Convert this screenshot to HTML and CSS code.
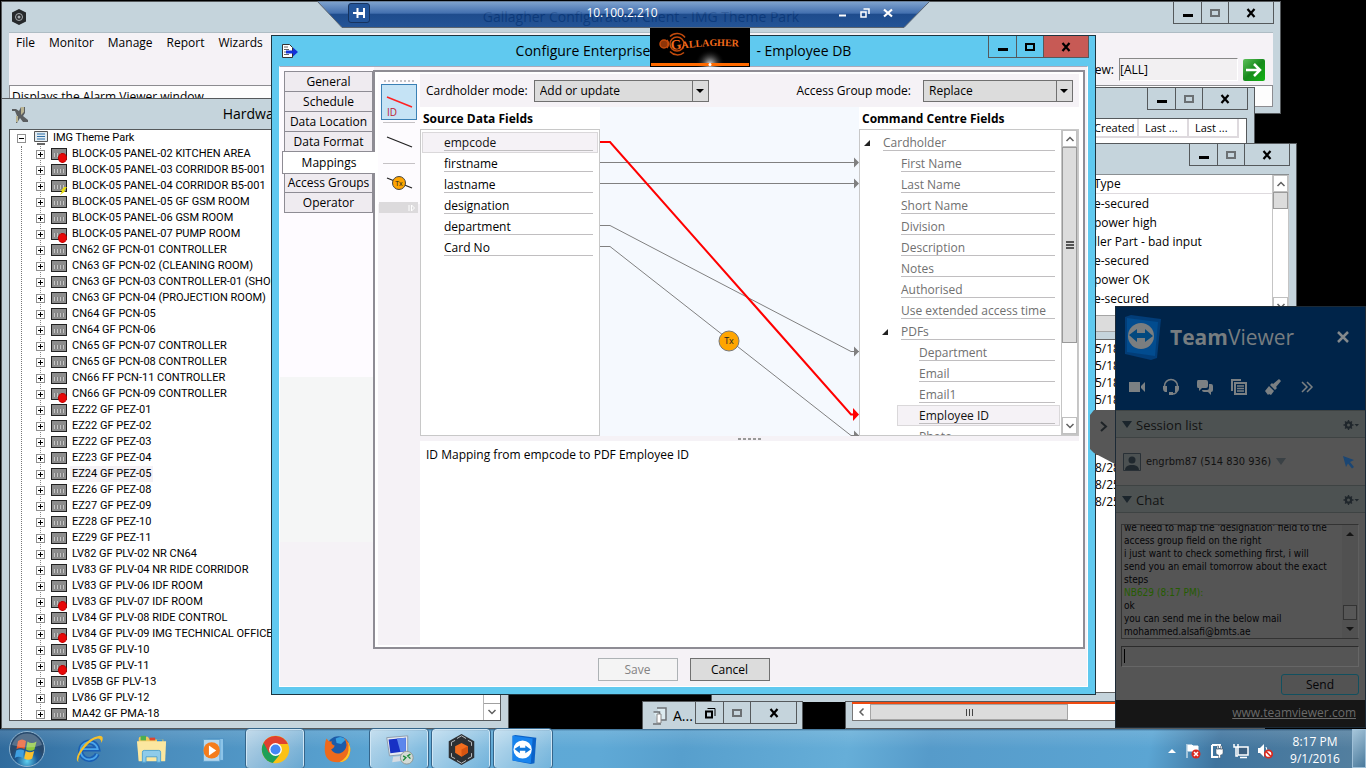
FILE: index.html
```html
<!DOCTYPE html>
<html lang="en">
<head>
<meta charset="utf-8">
<title>10.100.2.210 - Remote Desktop</title>
<link rel="stylesheet" href="styles.css">
</head>
<body>
<svg width="0" height="0" class="defs" aria-hidden="true">
  <defs>
    <symbol id="min" viewBox="0 0 12 12"><path d="M1 7h10v3H1z" fill="#000"/></symbol>
    <symbol id="max" viewBox="0 0 12 12"><path d="M2 3h8v6H2z" fill="none" stroke="currentColor" stroke-width="2"/></symbol>
    <symbol id="close" viewBox="0 0 12 12"><path d="M2.500 2l7 8M9.500 2l-7 8" stroke="#000" stroke-width="2.200"/></symbol>
    <symbol id="up" viewBox="0 0 10 10"><path d="M1.500 7L5 3.500 8.500 7" fill="none" stroke="#606060" stroke-width="1.500"/></symbol>
    <symbol id="down" viewBox="0 0 10 10"><path d="M1.500 3L5 6.500 8.500 3" fill="none" stroke="#606060" stroke-width="1.500"/></symbol>
    <symbol id="gear" viewBox="0 0 16 12"><circle cx="5.500" cy="6" r="2.700" fill="none" stroke="#20272c" stroke-width="2"/><path d="M5.500 1v10M.5 6h10M2 2.500l7 7M9 2.500l-7 7" stroke="#20272c" stroke-width="1.300"/><circle cx="5.500" cy="6" r="1.500" fill="#4d5252"/><path d="M11.500 5h4.500l-2.200 2.500z" fill="#20272c"/></symbol>
  </defs>
</svg>

<main class="desktop">

  <section class="win win-main">
    <header class="bar">
      <span class="bar-icon"><svg width="16" height="16" viewBox="0 0 16 16"><path d="M8 0l7 3.500v9L8 16l-7-3.500v-9z" fill="#26292b"/><circle cx="8" cy="8" r="3.500" fill="none" stroke="#a8adb0"/><circle cx="8" cy="8" r="1.500" fill="#a8adb0"/></svg></span>
      <h2 class="bar-title">Gallagher Configuration Client - IMG Theme Park</h2>
      <span class="ctls"><button aria-label="Minimize"><svg><use href="#min"/></svg></button><button aria-label="Maximize" class="dim"><svg><use href="#max"/></svg></button><button aria-label="Close"><svg><use href="#close"/></svg></button></span>
    </header>
    <div class="main-body">
      <nav class="menu"><a href="#">File</a><a href="#">Monitor</a><a href="#">Manage</a><a href="#">Report</a><a href="#">Wizards</a><a href="#">Configure</a></nav>
      <div class="viewbar"><label for="view">view:</label><input id="view" value="[ALL]"><button class="go" aria-label="Go"><svg width="22" height="22" viewBox="0 0 22 22"><path d="M3 11h14M11 5l6 6-6 6" fill="none" stroke="#fff" stroke-width="2.500"/></svg></button></div>
      <div class="status">Displays the Alarm Viewer window</div>
    </div>
  </section>

  <section class="win win-hardware">
    <header class="bar">
      <span class="bar-icon"><svg width="18" height="18" viewBox="0 0 18 18"><path d="M1 3h4l3 2 2-4h4v6l-2 3 5 4v2h-5l-3-4-3 5H5l1-7-2-5H1z" fill="#5b5e60"/><path d="M10 1l3 0v5l-3 3zM5 10h2v6H5z" fill="#b9b391"/></svg></span>
      <h2 class="bar-title">Hardware</h2>
      <span></span>
    </header>
    <div class="tree">
      <div class="tree-root"><button class="tog open" aria-label="Collapse"></button><svg width="14" height="14" viewBox="0 0 14 14"><path d="M.5.500h13v10H.5z" fill="#e2ecf2" stroke="#565656"/><path d="M3 3h8M3 5.500h8M3 8h8" stroke="#2d6ea8"/><path d="M3 12h8v2H3z" fill="#666"/></svg><span>IMG Theme Park</span></div>
      <ul>
        <li><button class="tog" aria-label="Expand"></button><i class="dev alarm"></i><span>BLOCK-05 PANEL-02 KITCHEN AREA</span></li>
        <li><button class="tog" aria-label="Expand"></button><i class="dev"></i><span>BLOCK-05 PANEL-03 CORRIDOR B5-001</span></li>
        <li><button class="tog" aria-label="Expand"></button><i class="dev power"></i><span>BLOCK-05 PANEL-04 CORRIDOR B5-001</span></li>
        <li><button class="tog" aria-label="Expand"></button><i class="dev"></i><span>BLOCK-05 PANEL-05 GF GSM ROOM</span></li>
        <li><button class="tog" aria-label="Expand"></button><i class="dev"></i><span>BLOCK-05 PANEL-06 GSM ROOM</span></li>
        <li><button class="tog" aria-label="Expand"></button><i class="dev alarm"></i><span>BLOCK-05 PANEL-07 PUMP ROOM</span></li>
        <li><button class="tog" aria-label="Expand"></button><i class="dev"></i><span>CN62 GF PCN-01 CONTROLLER</span></li>
        <li><button class="tog" aria-label="Expand"></button><i class="dev"></i><span>CN63 GF PCN-02 (CLEANING ROOM)</span></li>
        <li><button class="tog" aria-label="Expand"></button><i class="dev"></i><span>CN63 GF PCN-03 CONTROLLER-01 (SHOP)</span></li>
        <li><button class="tog" aria-label="Expand"></button><i class="dev"></i><span>CN63 GF PCN-04 (PROJECTION ROOM)</span></li>
        <li><button class="tog" aria-label="Expand"></button><i class="dev"></i><span>CN64 GF PCN-05</span></li>
        <li><button class="tog" aria-label="Expand"></button><i class="dev"></i><span>CN64 GF PCN-06</span></li>
        <li><button class="tog" aria-label="Expand"></button><i class="dev"></i><span>CN65 GF PCN-07 CONTROLLER</span></li>
        <li><button class="tog" aria-label="Expand"></button><i class="dev"></i><span>CN65 GF PCN-08 CONTROLLER</span></li>
        <li><button class="tog" aria-label="Expand"></button><i class="dev"></i><span>CN66 FF PCN-11 CONTROLLER</span></li>
        <li><button class="tog" aria-label="Expand"></button><i class="dev alarm"></i><span>CN66 GF PCN-09 CONTROLLER</span></li>
        <li><button class="tog" aria-label="Expand"></button><i class="dev"></i><span>EZ22 GF PEZ-01</span></li>
        <li><button class="tog" aria-label="Expand"></button><i class="dev"></i><span>EZ22 GF PEZ-02</span></li>
        <li><button class="tog" aria-label="Expand"></button><i class="dev"></i><span>EZ22 GF PEZ-03</span></li>
        <li><button class="tog" aria-label="Expand"></button><i class="dev"></i><span>EZ23 GF PEZ-04</span></li>
        <li><button class="tog" aria-label="Expand"></button><i class="dev"></i><span class="picked">EZ24 GF PEZ-05</span></li>
        <li><button class="tog" aria-label="Expand"></button><i class="dev"></i><span>EZ26 GF PEZ-08</span></li>
        <li><button class="tog" aria-label="Expand"></button><i class="dev"></i><span>EZ27 GF PEZ-09</span></li>
        <li><button class="tog" aria-label="Expand"></button><i class="dev"></i><span>EZ28 GF PEZ-10</span></li>
        <li><button class="tog" aria-label="Expand"></button><i class="dev"></i><span>EZ29 GF PEZ-11</span></li>
        <li><button class="tog" aria-label="Expand"></button><i class="dev"></i><span>LV82 GF PLV-02 NR CN64</span></li>
        <li><button class="tog" aria-label="Expand"></button><i class="dev"></i><span>LV83 GF PLV-04 NR RIDE CORRIDOR</span></li>
        <li><button class="tog" aria-label="Expand"></button><i class="dev"></i><span>LV83 GF PLV-06 IDF ROOM</span></li>
        <li><button class="tog" aria-label="Expand"></button><i class="dev alarm"></i><span>LV83 GF PLV-07 IDF ROOM</span></li>
        <li><button class="tog" aria-label="Expand"></button><i class="dev"></i><span>LV84 GF PLV-08 RIDE CONTROL</span></li>
        <li><button class="tog" aria-label="Expand"></button><i class="dev alarm"></i><span>LV84 GF PLV-09 IMG TECHNICAL OFFICE</span></li>
        <li><button class="tog" aria-label="Expand"></button><i class="dev"></i><span>LV85 GF PLV-10</span></li>
        <li><button class="tog" aria-label="Expand"></button><i class="dev alarm"></i><span>LV85 GF PLV-11</span></li>
        <li><button class="tog" aria-label="Expand"></button><i class="dev"></i><span>LV85B GF PLV-13</span></li>
        <li><button class="tog" aria-label="Expand"></button><i class="dev"></i><span>LV86 GF PLV-12</span></li>
        <li><button class="tog" aria-label="Expand"></button><i class="dev"></i><span>MA42 GF PMA-18</span></li>
      </ul>
      <div class="tree-scroll"><button aria-label="Scroll down"><svg width="10" height="10"><use href="#down"/></svg></button></div>
    </div>
  </section>

  <section class="win win-list">
    <header class="bar"><span></span><span></span>
      <span class="ctls"><button aria-label="Minimize"><svg><use href="#min"/></svg></button><button aria-label="Maximize" class="dim"><svg><use href="#max"/></svg></button><button aria-label="Close"><svg><use href="#close"/></svg></button></span>
    </header>
    <div class="client">
      <table>
        <tr><th>Created</th><th>Last ...</th><th>Last ...</th></tr>
        <tr><td>7/5/2...</td><td>8/22/...</td><td>Syst...</td></tr>
      </table>
    </div>
  </section>

  <section class="win win-events">
    <header class="bar"><span></span><span></span>
      <span class="ctls"><button aria-label="Minimize"><svg><use href="#min"/></svg></button><button aria-label="Maximize" class="dim"><svg><use href="#max"/></svg></button><button aria-label="Close"><svg><use href="#close"/></svg></button></span>
    </header>
    <div class="events">
      <div class="events-rows"><b>Type</b><p>e-secured</p><p>power high</p><p>ller Part - bad input</p><p>e-secured</p><p>power OK</p><p>e-secured</p></div>
      <div class="vscroll"><button aria-label="Scroll up"><svg width="10" height="10"><use href="#up"/></svg></button><i></i><button class="end" aria-label="Scroll down"><svg width="10" height="10"><use href="#down"/></svg></button></div>
    </div>
    <div class="hscroll"></div>
    <div class="dates"><p>5/18/2</p><p>5/18/2</p><p>5/18/2</p><p>5/18/2</p><p></p><p></p><p>8/25/2</p><p>8/28/2</p><p>8/25/2</p><p>8/25/2</p></div>
  </section>

  <section class="win win-alarm">
    <svg width="16" height="18" viewBox="0 0 16 18"><path d="M5 1h9v12H9M1.500 5h6v12M1 17h8" fill="#dcebf0" stroke="#6d7275" stroke-width="1.500"/><path d="M5 7h4v9H5z" fill="#fff" stroke="#888"/></svg>
    <h2>A...</h2>
    <span class="ctls"><button aria-label="Restore"><svg viewBox="0 0 12 12"><path d="M2 4.500h6v6H2z" fill="none" stroke="#000" stroke-width="2"/><path d="M3.500 1.500h7.500v7.500" fill="none" stroke="#000"/></svg></button><button aria-label="Maximize" class="dim"><svg><use href="#max"/></svg></button><button aria-label="Close"><svg><use href="#close"/></svg></button></span>
  </section>

  <section class="win win-bottom">
    <div class="redline"></div>
    <div class="hbar"><button aria-label="Scroll left"><svg width="10" height="10" viewBox="0 0 10 10"><path d="M6.500 1.500L3 5l3.500 3.500" fill="none" stroke="#606060" stroke-width="1.500"/></svg></button><span class="thumb"><i></i><i></i><i></i></span></div>
  </section>

  <section class="win dialog">
    <header class="bar">
      <span class="bar-icon"><svg width="18" height="16" viewBox="0 0 18 16"><path d="M1.500 1.500h7l3 3v10h-10z" fill="#fff" stroke="#333"/><path d="M3 4h4M3 6.500h5M3 9h4M3 11.500h5" stroke="#666"/><path d="M5 7.500h7V4.500l5 4.500-5 4.500v-3H5z" fill="#1432d8"/></svg></span>
      <h2 class="bar-title split"><span>Configure Enterprise</span><span>- Employee DB</span></h2>
      <span class="ctls"><button aria-label="Minimize"><svg><use href="#min"/></svg></button><button aria-label="Maximize"><svg><use href="#max"/></svg></button><button class="red" aria-label="Close"><svg><use href="#close"/></svg></button></span>
    </header>
    <div class="dialog-body">
      <nav class="tabs"><button>General</button><button>Schedule</button><button>Data Location</button><button>Data Format</button><button class="current">Mappings</button><button>Access Groups</button><button>Operator</button></nav>
      <div class="page">
        <div class="tools">
          <span class="grip"></span>
          <button class="on" aria-label="ID mapping"><svg width="34" height="34" viewBox="0 0 34 34"><path d="M5 12l25 10" stroke="#f22" stroke-width="1.500"/><text x="5" y="31" class="id-text">ID</text></svg></button>
          <hr>
          <button aria-label="Mapping"><svg width="34" height="34" viewBox="0 0 34 34"><path d="M5 11l25 10" stroke="#222" stroke-width="1.300"/></svg></button>
          <hr>
          <button aria-label="Transform mapping"><svg width="34" height="34" viewBox="0 0 34 34"><path d="M5 11l25 10" stroke="#222" stroke-width="1.300"/><circle cx="17" cy="16" r="6.500" fill="#ffa500" stroke="#444"/><text x="17" y="19" class="tx-small">Tx</text></svg></button>
          <span class="overflow"><svg width="8" height="8" viewBox="0 0 8 8"><path d="M1 1v6M3.500 1v6l3-3z" stroke="#fff" fill="none"/></svg></span>
        </div>
        <div class="work">
          <div class="modes">
            <label for="cm">Cardholder mode:</label><span class="combo"><select id="cm"><option>Add or update</option></select></span>
            <label for="am" class="push">Access Group mode:</label><span class="combo short"><select id="am"><option>Replace</option></select></span>
          </div>
          <div class="map">
            <div class="col source">
              <h3>Source Data Fields</h3>
              <ul class="fields"><li class="sel"><span>empcode</span></li><li><span>firstname</span></li><li><span>lastname</span></li><li><span>designation</span></li><li><span>department</span></li><li><span>Card No</span></li></ul>
            </div>
            <svg class="wires" viewBox="0 0 259 329" preserveAspectRatio="none">
              <g fill="none" stroke="#808080"><path d="M0 55.500h254M0 76.500h254M0 118.500h10l241 126h8M0 139.500h10l241 189h8"/></g>
              <path d="M254 50.500l5 5-5 5zM254 71.500l5 5-5 5zM254 239.500l5 5-5 5zM254 323.500l5 5-5 5z" fill="#808080"/>
              <path d="M0 35h10l241 272.500h4" fill="none" stroke="#f00" stroke-width="2"/>
              <path d="M253 301l6 6.500-6 6.500z" fill="#f00"/>
              <circle cx="129" cy="234" r="10" fill="#ffa500" stroke="#777"/><text x="129" y="237" class="tx">Tx</text>
            </svg>
            <div class="col target">
              <h3>Command Centre Fields</h3>
              <div class="target-box">
                <ul class="fields grey">
                  <li class="l0 tri"><span>Cardholder</span></li><li class="l1"><span>First Name</span></li><li class="l1"><span>Last Name</span></li><li class="l1"><span>Short Name</span></li><li class="l1"><span>Division</span></li><li class="l1"><span>Description</span></li><li class="l1"><span>Notes</span></li><li class="l1"><span>Authorised</span></li><li class="l1"><span>Use extended access time</span></li><li class="l1 tri"><span>PDFs</span></li><li class="l2"><span>Department</span></li><li class="l2"><span>Email</span></li><li class="l2"><span>Email1</span></li><li class="l2 sel"><span>Employee ID</span></li><li class="l2"><span>Photo</span></li>
                </ul>
                <div class="vscroll tall"><button aria-label="Scroll up"><svg width="10" height="10"><use href="#up"/></svg></button><i><b></b></i><button class="end" aria-label="Scroll down"><svg width="10" height="10"><use href="#down"/></svg></button></div>
              </div>
            </div>
          </div>
          <div class="splitter"><span></span></div>
          <p class="desc">ID Mapping from empcode to PDF Employee ID</p>
        </div>
      </div>
      <footer class="actions"><button disabled>Save</button><button>Cancel</button></footer>
    </div>
  </section>

  <div class="rdp">
    <svg class="rdp-shape" viewBox="0 0 613 27" preserveAspectRatio="none" aria-hidden="true"><defs><linearGradient id="rg" x1="0" y1="0" x2="0" y2="1"><stop offset="0" stop-color="#7ba1cf"/><stop offset=".46" stop-color="#3565aa"/><stop offset=".5" stop-color="#0c3d84"/><stop offset="1" stop-color="#12468f"/></linearGradient></defs><path d="M0 0h613l-26 26.500H25z" fill="url(#rg)" fill-opacity=".9" stroke="#5a6470"/></svg>
    <button class="pin" aria-label="Pin"><svg width="14" height="12" viewBox="0 0 14 12"><path d="M1 6h4M5.500 1v10M12 1v10M6 6h6" stroke="#fff" stroke-width="2" fill="none"/><path d="M6 7.500h6" stroke="#fff"/></svg></button>
    <span class="rdp-title">10.100.2.210</span>
    <button aria-label="Minimize"><svg width="10" height="12" viewBox="0 0 10 12"><path d="M2 8.500h7" stroke="#fff" stroke-width="2"/></svg></button>
    <button aria-label="Restore"><svg width="10" height="12" viewBox="0 0 10 12"><path d="M1 5h5v5H1z" fill="none" stroke="#fff" stroke-width="1.500"/><path d="M3.500 2h5.500v5" fill="none" stroke="#fff" stroke-width="1.500"/></svg></button>
    <button aria-label="Close"><svg width="10" height="12" viewBox="0 0 10 12"><path d="M1 2.500l8 7M9 2.500l-8 7" stroke="#fff" stroke-width="2.200"/></svg></button>
  </div>

  <svg class="logo" width="100" height="39" viewBox="0 0 100 39" role="img" aria-label="Gallagher">
    <defs><radialGradient id="glow"><stop offset="0" stop-color="#ddd"/><stop offset="1" stop-color="#000" stop-opacity="0"/></radialGradient><path id="arc" d="M21 22Q50 18 64 18T96 19"/></defs>
    <path d="M0 0h100v39H0z"/><circle cx="60" cy="36" r="15" fill="url(#glow)"/>
    <path d="M1 35h98v3H1z" fill="#ff6a00"/><circle cx="60" cy="36.500" r="1.500" fill="#fff"/>
    <g fill="none" stroke="#c24a0c" stroke-width="1.500"><circle cx="27" cy="16" r="7"/><path d="M20 8.500a10 10 0 0 1 15 1M20 23.500a10 10 0 0 0 14 1"/><circle cx="14" cy="16" r="4" fill="#8f3508"/><path d="M17 12q3 4 0 8"/></g>
    <text class="logo-text"><textPath href="#arc"><tspan class="logo-g">G</tspan>ALLAGHER</textPath></text>
  </svg>

  <aside class="tv">
    <button class="tv-handle" aria-label="Collapse panel"><svg width="25" height="54" viewBox="0 0 25 54"><path d="M25 0H4L0 5v34l4 4 21 11z" fill="#575757"/><path d="M11 12l5 4.500-5 4.500" fill="none" stroke="#1e2327" stroke-width="2"/></svg></button>
    <header class="tv-head">
      <div class="tv-brand">
        <svg width="38" height="46" viewBox="0 0 38 46"><path d="M1 3l6-2 30 4-4 39-6 2L1 40z" fill="#023d78"/><path d="M3 4l31 4-3 34L3 38z" fill="#024c8f"/><circle cx="17" cy="22" r="13" fill="#7a7e80"/><path d="M5 21l8-6v4h8v-4l8 7-8 6v-4h-8v4z" fill="#02497f"/></svg>
        <h2><b>Team</b>Viewer</h2>
        <button aria-label="Close"><svg width="14" height="14" viewBox="0 0 14 14"><path d="M2 2l10 10M12 2L2 12" stroke="#83898c" stroke-width="2.500"/></svg></button>
      </div>
      <nav class="tv-tools">
        <button aria-label="Video"><svg viewBox="0 0 18 18"><path d="M1 4h11v10H1zM13 8l4-4v10l-4-4z"/></svg></button>
        <button aria-label="Audio"><svg viewBox="0 0 18 18"><path d="M2.500 10V8a6.500 6.500 0 0 1 13 0v2M15 12q0 4-5 4" fill="none" stroke="#7b8083" stroke-width="1.500"/><path d="M1 8h4v6H3q-2-1-2-3zM13 8h4v3q0 2-2 3h-2zM7 14h4v3H7z"/></svg></button>
        <button aria-label="Chat"><svg viewBox="0 0 18 18"><path d="M2 2h8q2 0 2 2v4q0 2-2 2H6l-3 3v-3H2q-1 0-1-2V4q0-2 1-2z"/><path d="M13 6h2q2 0 2 2v4q0 2-2 2v3l-3-3H8q-2 0-2-2h5q2 0 2-2z"/></svg></button>
        <button aria-label="Files"><svg viewBox="0 0 18 18"><path d="M2 13V2h9M5 5h11v11H5z" fill="none" stroke="#7b8083" stroke-width="2"/><path d="M7 8h7M7 10.500h7M7 13h7" stroke="#7b8083" stroke-width="1.500"/></svg></button>
        <button aria-label="Whiteboard"><svg viewBox="0 0 18 18"><path d="M15 1l2 2-5 6 1 1-2 2-5-5 2-2 1 1zM5 8l5 5-3 4-2-1-1 1-3-4z"/></svg></button>
        <button aria-label="More"><svg viewBox="0 0 18 18"><path d="M4 4l5 5-5 5M9 4l5 5-5 5" fill="none" stroke="#7b8083" stroke-width="1.500"/></svg></button>
      </nav>
    </header>
    <h3 class="tv-sec"><i></i><span>Session list</span><svg width="16" height="12"><use href="#gear"/></svg></h3>
    <div class="tv-user">
      <svg width="18" height="18" viewBox="0 0 18 18"><path d="M.5.500h17v17H.5z" fill="#4c5152" stroke="#293036"/><circle cx="9" cy="7" r="3.500" fill="#20282e"/><path d="M2 17q0-4 5-5h4q5 1 5 5z" fill="#20282e"/></svg>
      <span>engrbm87 (514 830 936)</span><i></i>
      <svg class="cursor" width="12" height="14" viewBox="0 0 12 14"><path d="M0 1l11 4-4 2 4 5-2 1.500-4-5-2 3.500z" fill="#1b4673"/></svg>
    </div>
    <h3 class="tv-sec"><i></i><span>Chat</span><svg width="16" height="12"><use href="#gear"/></svg></h3>
    <div class="tv-chat">
      <div class="log"><div class="log-text"><p>we need to map the 'designation' field to the</p><p>access group field on the right</p><p>i just want to check something first, i will</p><p>send you an email tomorrow about the exact</p><p>steps</p><p class="who">NB629 (8:17 PM):</p><p>ok</p><p>you can send me in the below mail</p><p>mohammed.alsafi@bmts.ae</p></div>
        <div class="log-scroll"><i class="a-up"></i><b></b><i class="a-down"></i></div></div>
      <div class="msg-wrap"><input aria-label="Message"></div>
      <button class="send">Send</button>
    </div>
    <footer class="tv-foot"><a href="#">www.teamviewer.com</a></footer>
  </aside>

  <footer class="taskbar">
    <button class="start" aria-label="Start"><svg width="38" height="38" viewBox="0 0 38 38"><defs><radialGradient id="orb" cy=".85"><stop offset="0" stop-color="#5fd0f0"/><stop offset=".6" stop-color="#1c5a94"/><stop offset="1" stop-color="#27496c"/></radialGradient></defs><circle cx="19" cy="19" r="17.500" fill="url(#orb)" stroke="#8fb4cf"/><path d="M10 11q4-3 8 0l-1.500 8q-4-2-8 0z" fill="#e8582a"/><path d="M19.500 11.500q4 3 9 0l-2 8q-4 2.500-8.500 0z" fill="#8cc63e"/><path d="M8.200 20.500q4-2 8 0l-1.500 7.500q-4-2.500-8 0z" fill="#3f9fe0"/><path d="M17.700 21q4 2.500 8.500 0l-2 7.500q-4 2.500-8 0z" fill="#fbc12e"/><path d="M4 15a15.500 15.500 0 0 1 30 0q-14 5-30 0z" fill="#fff" opacity=".22"/></svg></button>
    <nav class="apps">
      <button aria-label="Internet Explorer"><svg viewBox="0 0 34 34"><path d="M25.500 22A9.500 9.500 0 1 1 26 16.500H9" fill="none" stroke="#1a5fb4" stroke-width="5.500"/><path d="M25.500 22A9.500 9.500 0 1 1 26 16.500H9" fill="none" stroke="#4ba6ea" stroke-width="2"/><path d="M5 31Q0 28 8 16T28 2q6 0 2 8 0-5-4-5-7 1-15 11T5 31z" fill="#f5c02c"/></svg></button>
      <button aria-label="Explorer"><svg viewBox="0 0 34 34"><path d="M3 5q0-2 2-2h8l2 3h15v23H3z" fill="#eec85c"/><path d="M5 2h6v5H5z" fill="#4caf50"/><path d="M15 4h6v3h-6z" fill="#e0452c"/><path d="M23 6h6v3h-6z" fill="#2d8fd8"/><path d="M1 8h32l-1 22H3z" fill="#fbe7a0"/><path d="M7 31V20q0-2 2-2h16q2 0 2 2v11h-4v-6H11v6z" fill="#8ecbea" stroke="#4b9fd0"/></svg></button>
      <button aria-label="Media Player"><svg viewBox="0 0 34 34"><path d="M11 5h17v24H11z" fill="#8cc4e8" stroke="#4f93c4"/><path d="M6 6h18v24H6z" fill="#b5d7ee" stroke="#5b9ecb"/><circle cx="15" cy="18" r="9" fill="#f57c1c"/><path d="M12 12.500l8 5.500-8 5.500z" fill="#fff"/></svg></button>
      <button class="run" aria-label="Chrome"><svg viewBox="0 0 34 34"><circle cx="17" cy="17" r="15" fill="#fbc116"/><path d="M17 17L4 9.500A15 15 0 0 0 14 31.700l7-8z" fill="#1ea058"/><path d="M4 9.500A15 15 0 0 1 30.500 11H17l-7 10z" fill="#e0402f"/><circle cx="17" cy="17" r="7" fill="#fff"/><circle cx="17" cy="17" r="5.500" fill="#4486f4"/></svg></button>
      <button aria-label="Firefox"><svg viewBox="0 0 34 34"><circle cx="18" cy="15" r="12.500" fill="#1c5ba8"/><path d="M15 5q6-4 11 1l-5 5-5-1z" fill="#39a1e0"/><path d="M5 5q2 4 6 3-2 3 3 5-1 3-4 4 4 6 10 4t7-9q0-4-3-8 7 5 7 13 0 14-14 14T3 17Q3 9 5 5z" fill="#ee6a1c"/><path d="M28 8q5 7 2 15t-11 8q9-5 10-13 1-6-1-10z" fill="#fcc52b"/></svg></button>
      <button class="run" aria-label="Remote Desktop"><svg viewBox="0 0 34 34"><path d="M3 4l23-2v20L6 24z" fill="#e5eaf0" stroke="#8b99a8"/><path d="M5 6l19-2v15L7 21z" fill="#1730c4"/><path d="M14 5l10-1v15l-6 .5z" fill="#5c86ec"/><path d="M10 25l9-1 4 5-14 2z" fill="#d5dbe2"/><circle cx="25" cy="26" r="7" fill="#d4dad5" stroke="#8d9590"/><path d="M21 24l3 2-3 3M29 22l-3 2 3 3" fill="none" stroke="#188a38" stroke-width="1.500"/></svg></button>
      <button class="run" aria-label="Gallagher"><svg viewBox="0 0 34 34"><path d="M17 0l14 8v18l-14 8-14-8V8z" fill="#2c3034"/><path d="M17 10l7 3.500v7L17 25l-7-4.500v-7z" fill="#f26d1e"/><path d="M17 17l7-3.500v7L17 25z" fill="#d65410"/><path d="M12 5l5-3 5 3M6 13V9l4-2M28 13V9l-4-2M6 21v4l4 2M28 21v4l-4 2M12 29l5 3 5-3" fill="none" stroke="#c5c8ca"/></svg></button>
      <button class="run" aria-label="TeamViewer"><svg viewBox="0 0 34 34"><path d="M5 2l3-1 23 3-2 28-4 1L5 29z" fill="#0b62c8"/><path d="M5 2l22 3-2 27-20-3z" fill="#1884ee"/><circle cx="16" cy="17" r="10" fill="#fff"/><path d="M7 16.500l6-4v2.500h6v-2.500l6 4.500-6 4v-2.500h-6V21z" fill="#1178dc"/></svg></button>
    </nav>
    <div class="tray">
      <svg width="10" height="6" viewBox="0 0 10 6"><path d="M1 5h8L5 1z" fill="#fff"/></svg>
      <svg width="16" height="16" viewBox="0 0 16 16"><path d="M2 1v14M3 2h4l1 1h5v6H8L7 8H3z" fill="#fff" stroke="#fff"/><circle cx="11" cy="11" r="4.500" fill="#d92a20"/><path d="M9 9l4 4M13 9l-4 4" stroke="#fff" stroke-width="1.500"/></svg>
      <svg width="16" height="16" viewBox="0 0 16 16"><path d="M3 2h8v3M3 2v12h7" fill="none" stroke="#fff" stroke-width="2"/><path d="M7 6h7v4q0 2-2.500 2v3h-2v-3Q7 12 7 10zM8 3h1.500v3H8zM11.500 3H13v3h-1.500z" fill="#fff" stroke="#456"  stroke-width=".5"/></svg>
      <svg width="16" height="16" viewBox="0 0 16 16"><path d="M5 4h10v8H5zM7 14.500h7" fill="#3c6080" stroke="#fff" stroke-width="1.500"/><path d="M1 1v3h4V1M3 4v9h2" fill="none" stroke="#fff" stroke-width="1.500"/></svg>
      <svg width="16" height="16" viewBox="0 0 16 16"><path d="M1 5h2l4-4v13l-4-4H1z" fill="#fff"/><path d="M9 4q2 3 0 7" fill="none" stroke="#fff"/><circle cx="11.500" cy="11" r="3.700" fill="#fff" stroke="#d92a20" stroke-width="1.700"/><path d="M9 8.500l5 5" stroke="#d92a20" stroke-width="1.700"/></svg>
    </div>
    <time class="clock"><span>8:17 PM</span><span>9/1/2016</span></time>
    <button class="show" aria-label="Show desktop"></button>
  </footer>
</main>
</body>
</html>
```
FILE: styles.css
```css
* { box-sizing: border-box; margin: 0; padding: 0; }
body { font: 12px/16px "Open Sans", "Noto Sans", sans-serif; color: #000; background: #000; }
button, input, select { font: inherit; color: inherit; border: 0; background: none; border-radius: 0; }
button { display: flex; align-items: center; justify-content: center; }
svg { display: block; flex: none; }
ul { list-style: none; }
a { color: inherit; text-decoration: none; }
.defs { position: absolute; }
.desktop { position: relative; height: 100vh; min-height: 768px; overflow: hidden; }

/* window frame */
.win { position: absolute; background: #c5d4dc; border: 1px solid #55595c; overflow: hidden; }
.bar { display: grid; grid-template-columns: 101px 1fr 101px; align-items: start; height: 30px; padding: 0 6px; }
.bar-icon { padding: 7px 3px; }
.bar-title { font-size: 14px; font-weight: 400; line-height: 30px; text-align: center; white-space: nowrap; }
.split { display: flex; justify-content: center; gap: 106px; }
.ctls { display: flex; flex: none; height: 22px; border: solid #55595c; border-width: 0 1px 1px; }
.ctls button { width: 27px; }
.ctls button + button { border-left: 1px solid #55595c; }
.ctls button:last-child { flex: 1; }
.ctls svg { width: 12px; height: 12px; }
.dim { color: #6b7073; }

.win-main { left: 1px; top: 1px; width: 1280px; height: 113px; }
.main-body { display: grid; grid-template-columns: 1fr auto; grid-template-rows: 52px 22px; margin: 0 7px; background: #f5f2f6; border-top: 1px solid #aebcc4; }
.menu { display: flex; gap: 14px; padding: 2px 7px; }
.viewbar { display: flex; align-items: center; padding: 21px 8px 0 0; }
.viewbar input { width: 119px; height: 23px; margin: 0 5px; border: 1px solid; border-color: #888 #fff #fff #888; background: #f2f0f2; }
.go { width: 22px; height: 22px; background: linear-gradient(135deg, #5dc05a, #178a1c 50%, #12b512); border-radius: 2px; }
.status { grid-column: 1 / -1; padding: 3px 2px; border: 1px solid #8c8c90; background: #fdfdfd; }

.win-hardware { left: 1px; top: 98px; width: 508px; height: 631px; }
.tree { position: relative; height: 592px; margin: 0 7px; background: #fff; border: 1px solid #55595c; overflow: hidden; font: 12px/16px Roboto, "Liberation Sans", sans-serif; white-space: nowrap; }
.tree-root { display: flex; align-items: center; gap: 5px; height: 16px; padding-left: 7px; font-size: 11px; }
.tree-root svg { margin-left: 3px; }
.tree ul { margin-left: 11px; border-left: 1px dotted #777; }
.tree li { display: flex; align-items: center; height: 16px; padding-left: 14px; background: linear-gradient(#888 50%, #fff 50%) 18px 0 / 1px 2px repeat-y; }
.tog { position: relative; width: 9px; height: 9px; border: 1px solid #909090; background: #fff linear-gradient(#000, #000) 1px 3px / 5px 1px no-repeat; }
.tog:not(.open)::after { content: ""; position: absolute; left: 3px; top: 1px; width: 1px; height: 5px; background: #000; }
.dev { position: relative; width: 16px; height: 12px; margin: 0 3px 0 6px; border: 1px solid #222; background: repeating-linear-gradient(90deg, #c5c5c5 0 1px, #858585 1px 3px) 2px 4px / 11px 4px no-repeat, #8c8c8c; }
.dev.alarm::after, .dev.power::after { content: ""; position: absolute; right: -1px; bottom: -4px; width: 7px; height: 8px; border-radius: 50%; background: #e80808; border: 1px solid #b00; }
.dev.power::after { border: 0; border-radius: 0; background: #e6dc10; clip-path: polygon(60% 0, 100% 0, 60% 50%, 80% 50%, 0 100%, 30% 50%, 10% 50%); }
.tree li span { padding: 0 2px; font-size: 11px; line-height: 16px; }
.tree li .picked { background: #f5f2f6; }
.tree-scroll { position: absolute; right: 0; top: 0; bottom: 0; width: 17px; display: flex; align-items: end; border-left: 1px solid #b5b5b5; background: #fff; }
.tree-scroll button { width: 16px; height: 17px; border-top: 1px solid #a0a0a0; }

.win-list { left: 700px; top: 87px; width: 555px; height: 300px; }
.client { height: 200px; margin: 0 7px; padding-right: 7px; border: 1px solid #55595c; background: #fff; }
.client table { margin-left: auto; border-collapse: collapse; font-size: 11px; }
.client th { width: 50px; height: 18px; padding: 0 2px 0 6px; text-align: left; font-weight: 400; border: solid #dedade; border-width: 0 2px 2px 0; white-space: nowrap; }
.client td { padding: 0 2px 0 6px; height: 18px; }

.win-events { left: 711px; top: 143px; width: 586px; height: 559px; border-bottom: 0; }
.events { display: flex; justify-content: space-between; height: 141px; margin: 0 7px; border-top: 1px solid #8a8f92; background: #fff; overflow: hidden; }
.events-rows { flex: 1; padding-left: 375px; line-height: 19px; }
.events-rows b { display: block; height: 19px; font-weight: 400; line-height: 18px; border-bottom: 1px solid #dedade; }
.vscroll { display: flex; flex-direction: column; width: 17px; border: 1px solid #c5c5c5; border-top: 0; background: #fff; }
.vscroll button { height: 17px; flex: none; border: 1px solid #c0c0c0; background: #fff; }
.vscroll i { height: 17px; background: #dcdcdc; border: 1px solid #9a9a9a; }
.vscroll .end { margin-top: auto; }
.hscroll { height: 17px; margin: 0 7px 7px; background: #dcdcdc; border: 1px solid #a5a5a5; }
.dates { height: 354px; margin: 0 7px; padding-left: 376px; border: solid #666; border-width: 1px 0; background: #fff; line-height: 17px; }
.dates p { min-height: 17px; }

.win-alarm { display: flex; left: 642px; top: 701px; width: 161px; height: 40px; padding: 0 5px 0 9px; gap: 5px; }
.win-alarm > svg { margin-top: 5px; }
.win-alarm h2 { flex: 1; min-width: 0; font-size: 14px; font-weight: 400; line-height: 28px; }
.win-alarm .ctls { width: 102px; }
.win-bottom { left: 845px; top: 701px; width: 420px; height: 28px; padding: 0 6px; }
.redline { height: 2px; background: #f04a10; }
.hbar { display: flex; height: 17px; background: #fff; border: solid #777; border-width: 0 0 1px 1px; }
.hbar button { width: 17px; }
.thumb { display: flex; align-items: center; justify-content: center; gap: 2px; width: 198px; background: #dcdcdc; border: 1px solid #a5a5a5; }
.thumb i { width: 1px; height: 7px; background: #444; }

/* dialog */
.dialog { left: 271px; top: 35px; width: 825px; height: 660px; background: #60c9ef; border-color: #1d3540; }
.red { background: #c75a55; }
.dialog-body { display: grid; grid-template-columns: 94px 1fr; grid-template-rows: 582px 1fr; height: 621px; margin: 0 7px; background: #f5f2f6; border: 1px solid #fff; border-top-color: #aab; }
.tabs { padding: 4px 0 0 4px; background: linear-gradient(#fefbff 0 310px, #f5f6f6 310px 475px, #f5f2f6 475px); }
.tabs button { width: 89px; height: 21px; margin-bottom: -1px; border: 1px solid #8e8c94; background: #efebf0; }
.tabs .current { position: relative; width: 93px; height: 23px; margin: -1px 0 -2px -2px; background: #fff; border-right: 0; }
.page { display: grid; grid-template-columns: 42px 1fr; margin: 3px 2px 0 -1px; padding: 2px 4px 2px 3px; border: 2px solid #8e8c94; background: #fff; }
.tools { display: flex; flex-direction: column; align-items: center; padding: 6px 3px 0 2px; background: linear-gradient(#fdfbfe 130px, #f5f2f6 130px); }
.grip { width: 30px; height: 2px; margin-bottom: 2px; background: repeating-linear-gradient(90deg, #c5c2c5 0 2px, transparent 2px 4px); }
.tools button { width: 36px; height: 36px; flex: none; }
.tools .on { background: #c5e3f5; border: 1px solid #3a80b5; }
.tools hr { width: 32px; margin: 2px 0; border: 0; border-top: 1px solid #c5c2c5; }
.overflow { display: flex; justify-content: end; align-items: center; width: 39px; height: 11px; flex: none; padding-right: 2px; background: #dcdadc; }
.id-text { font: 10px "Open Sans", sans-serif; fill: #c02030; }
.tx, .tx-small { font: 9px "Open Sans", sans-serif; text-anchor: middle; fill: #222; }
.tx-small { font-size: 7px; }
.work { display: flex; flex-direction: column; min-width: 0; }
.modes { display: flex; align-items: center; height: 33px; padding: 0 6px; background: #f5f2f6; white-space: nowrap; }
.push { margin-left: auto; }
.combo { position: relative; width: 175px; height: 22px; margin-left: 6px; }
.combo.short { width: 150px; margin-left: 12px; }
.combo select { appearance: none; width: 100%; height: 100%; padding: 0 5px; background: #dcdcdc; border: 1px solid #707070; }
.combo::before { content: ""; position: absolute; right: 16px; top: 0; bottom: 0; border-left: 1px solid #707070; }
.combo::after { content: ""; position: absolute; right: 5px; top: 9px; border: 4px solid transparent; border-top-color: #000; border-bottom: 0; pointer-events: none; }
.map { display: grid; grid-template-columns: 180px 1fr 220px; height: 329px; }
.col { display: flex; flex-direction: column; min-height: 0; }
.col h3 { height: 22px; padding-left: 3px; font-size: 12px; font-weight: 700; line-height: 23px; }
.wires { width: 100%; height: 100%; background: #f5f9fe; }
.fields { flex: 1; padding: 2px 1px; overflow: hidden; }
.source .fields { border: 1px solid #c8c8c8; }
.fields li { height: 21px; padding: 0 4px 0 21px; border: 1px solid transparent; line-height: 19px; }
.fields span { display: block; height: 18px; border-bottom: 1px solid #c0bec0; }
.fields .sel { background: #f5f2f6; border-color: #dad8da; color: #111; }
.grey { color: #707070; }
.target-box { display: flex; flex: 1; min-height: 0; border: 1px solid #c8c8c8; }
.grey li { position: relative; }
.grey .l1 { margin-left: 18px; }
.grey .l2 { margin-left: 36px; }
.tri::before { content: ""; position: absolute; left: 2px; top: 7px; border: 3px solid #222; border-top-color: transparent; border-left-color: transparent; }
.tall { flex: none; }
.tall i { display: flex; align-items: center; justify-content: center; height: 196px; }
.tall b { width: 8px; height: 8px; background: repeating-linear-gradient(#555 0 2px, transparent 2px 3px); }
.splitter { display: flex; align-items: center; justify-content: center; height: 5px; background: #f5f2f6; }
.splitter span { width: 24px; height: 2px; background: repeating-linear-gradient(90deg, #999 0 3px, transparent 3px 5px); }
.desc { padding: 6px; }
.actions { grid-column: 1 / -1; display: flex; justify-content: center; gap: 12px; padding-top: 9px; }
.actions button { width: 80px; height: 23px; border: 1px solid #707070; background: #dcdcdc; }
.actions button:disabled { color: #838383; background: #f4f4f4; border-color: #adb2b5; }

/* remote desktop connection bar */
.rdp { position: absolute; left: 317px; top: 1px; width: 613px; height: 27px; display: flex; align-items: center; padding: 0 31px 3px 31px; color: #fff; }
.rdp-shape { position: absolute; inset: 0; width: 100%; height: 100%; }
.rdp button { position: relative; width: 23px; }
.rdp .pin { width: 22px; height: 20px; border: 1px solid #16335e; border-radius: 3px; background: #23559a; }
.rdp-title { position: relative; flex: 1; padding-left: 44px; text-align: center; font-size: 12px; }
.logo { position: absolute; left: 650px; top: 28px; }
.logo-text { font: bold 10px "Liberation Serif", serif; fill: #f26a1a; }
.logo-g { font-size: 14px; }

/* TeamViewer panel */
.tv { position: absolute; right: 0; top: 306px; width: 251px; height: 422px; display: flex; flex-direction: column; background: #555; border: 1px solid #1c2a36; color: #121212; }
.tv-handle { position: absolute; left: -26px; top: 103px; }
.tv-head { height: 103px; flex: none; background: #002449; }
.tv-brand { display: flex; align-items: center; gap: 8px; height: 60px; padding: 0 15px 0 8px; }
.tv-brand h2 { flex: 1; font-size: 21px; font-weight: 400; line-height: 30px; color: #777d80; }
.tv-tools { display: flex; gap: 16px; padding: 11px 12px; }
.tv-tools svg { width: 18px; height: 18px; fill: #7b8083; }
.tv-sec { display: flex; align-items: center; gap: 4px; height: 28px; flex: none; padding: 1px 6px 0 6px; background: #4d5252; border: solid #3e4343; border-width: 1px 0; font-size: 13px; font-weight: 400; }
.tv-sec i, .tv-user i { border: 5px solid transparent; border-top: 7px solid #1b252c; border-bottom: 0; }
.tv-sec span { flex: 1; }
.tv-user { display: flex; align-items: center; gap: 5px; height: 47px; flex: none; padding: 0 10px 0 7px; font: 11px/14px "DejaVu Sans Condensed", sans-serif; }
.tv-user i { border-top-color: #3a4145; }
.cursor { margin-left: auto; }
.tv-chat { flex: 1; display: flex; flex-direction: column; gap: 7px; padding: 11px 6px 0 5px; font: 10px/13px "DejaVu Sans Condensed", sans-serif; color: #050508; }
.log { display: flex; height: 115px; border: 1px solid #333; border-right-color: #5e5e5e; }
.log-text { flex: 1; display: flex; flex-direction: column; justify-content: end; overflow: hidden; padding-left: 2px; white-space: nowrap; }
.who { color: #255c00; }
.log-scroll { display: flex; flex-direction: column; align-items: center; width: 16px; flex: none; padding: 7px 0; background: #515151; }
.log-scroll b { width: 14px; height: 15px; margin-top: auto; border: 1px solid #333; background: #575757; }
.log-scroll i { border: 4px solid transparent; }
.log-scroll .a-up { border-bottom-color: #151515; border-top: 0; }
.log-scroll .a-down { margin-top: 7px; border-top-color: #151515; border-bottom: 0; }
.msg-wrap { display: flex; height: 21px; border: 1px solid #2c2c2c; border-color: #2c2c2c #666 #666 #2c2c2c; }
.msg-wrap::before { content: ""; width: 1px; height: 14px; margin: 2px; background: #000; }
.msg-wrap input { flex: 1; min-width: 0; }
.send { align-self: end; width: 78px; height: 21px; border: 1px solid #12505f; border-radius: 3px; background: #535353; font: 12px "Open Sans", sans-serif; }
.tv-foot { height: 27px; flex: none; padding: 5px 9px; background: #161616; color: #6a6a6a; text-align: right; }
.tv-foot a { text-decoration: underline; }

/* taskbar */
.taskbar { position: absolute; left: 0; right: 0; bottom: 0; height: 39px; display: flex; background: linear-gradient(rgba(30, 60, 90, .6), rgba(255, 255, 255, .12) 2px, transparent 50%), linear-gradient(100deg, #2f6a9c, #4a8dbd 12%, #5da8d6 30%, #5fa9d6 44%, #579fcd 50%, #66aed8 62%, #569bca 68%, #5ba5d3 84%, #3f749e 89%, #55809f); }
.start { width: 52px; padding-left: 2px; }
.apps { display: flex; gap: 4px; padding-left: 8px; flex: 1; }
.apps button { width: 58px; height: 39px; padding-top: 1px; }
.apps svg { width: 31px; height: 31px; }
.apps .run { border: 1px solid #cfe6f5; border-bottom: 0; border-radius: 3px; background: linear-gradient(135deg, rgba(255, 255, 255, .6), rgba(255, 255, 255, .12)); outline: 1px solid #35658a; }
.tray { display: flex; align-items: center; gap: 8px; padding: 4px 12px 0 0; }
.clock { display: flex; flex-direction: column; width: 60px; padding-top: 4px; color: #fff; text-align: center; line-height: 17px; }
.show { width: 14px; height: 39px; margin-left: 7px; border: 1px solid #9fc0d8; background: linear-gradient(135deg, #a5c5da, #4b7a9c); }
```
